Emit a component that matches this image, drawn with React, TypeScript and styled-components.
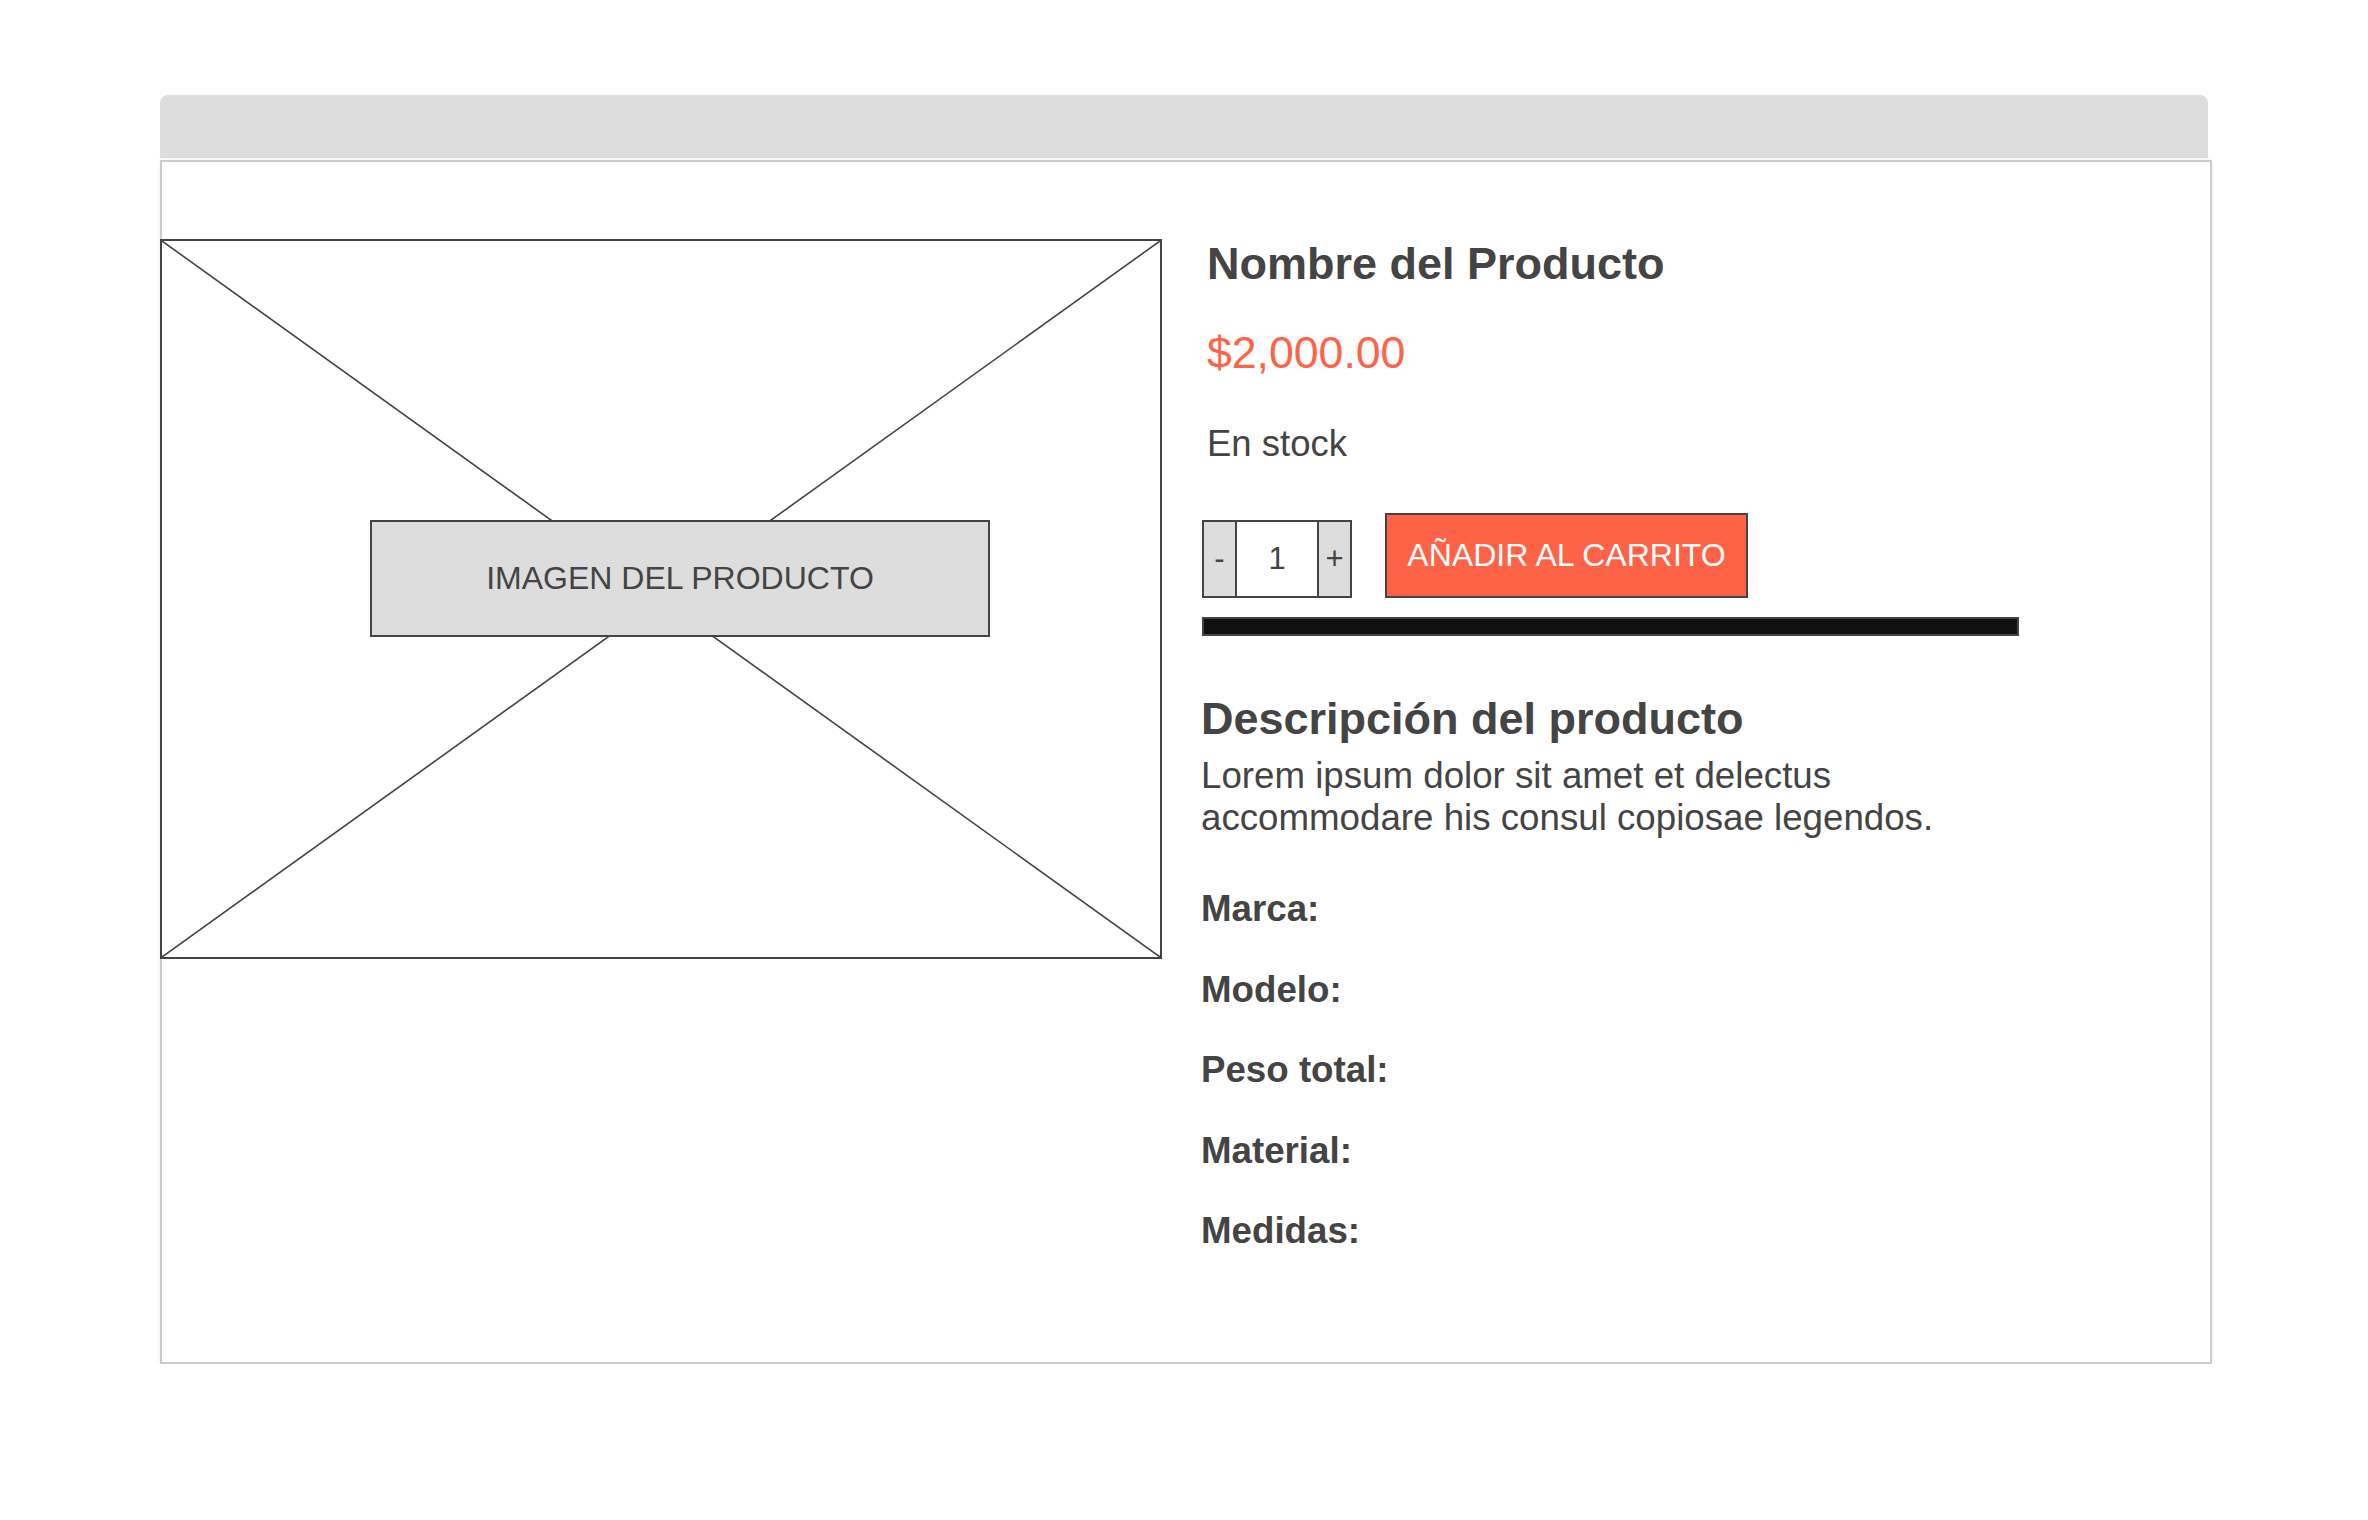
import styled, { createGlobalStyle } from "styled-components";

const GlobalStyle = createGlobalStyle`
  html, body {
    margin: 0;
    padding: 0;
    background: #ffffff;
  }
  body {
    font-family: "Liberation Sans", Arial, sans-serif;
    color: #444444;
  }
`;

const Page = styled.div`
  padding: 95px 0 0 160px;
`;

const Frame = styled.div`
  width: 2052px;
`;

const TopBar = styled.div`
  width: 2048px;
  height: 63px;
  background-color: #dddddd;
  border-radius: 8px 8px 0 0;
  margin-bottom: 2px;
`;

const Card = styled.section`
  box-sizing: border-box;
  width: 2052px;
  border: 2px solid #cccccc;
  background: #ffffff;
  box-shadow: 0 0 6px rgba(0, 0, 0, 0.06);
  padding: 77px 0 110px 0;
  display: flex;
  align-items: flex-start;
  gap: 39px;
`;

const ImageBox = styled.div`
  position: relative;
  box-sizing: border-box;
  width: 1002px;
  height: 720px;
  margin-left: -2px;
  border: 2px solid #444444;
  flex-shrink: 0;
`;

const Cross = styled.svg`
  display: block;
  width: 100%;
  height: 100%;
`;

const ImageLabel = styled.div`
  position: absolute;
  left: 208px;
  top: 279px;
  box-sizing: border-box;
  width: 620px;
  height: 117px;
  background-color: #dddddd;
  border: 2px solid #444444;
  display: flex;
  align-items: center;
  justify-content: center;
  font-size: 32px;
  color: #444444;
`;

const Details = styled.div`
  width: 820px;
  display: flex;
  flex-direction: column;
`;

const Summary = styled.div`
  padding-left: 6px;
  display: flex;
  flex-direction: column;
`;

const Title = styled.h1`
  margin: 0;
  font-size: 45px;
  line-height: 50px;
  font-weight: 700;
  color: #444444;
`;

const Price = styled.div`
  margin-top: 39px;
  font-size: 44.6px;
  line-height: 50px;
  color: #ff6347;
`;

const Stock = styled.div`
  margin-top: 45px;
  font-size: 36.5px;
  line-height: 42px;
  color: #444444;
`;

const Actions = styled.div`
  margin: 48px 0 0 1px;
  display: flex;
  align-items: flex-end;
  gap: 33px;
`;

const Quantity = styled.div`
  box-sizing: border-box;
  height: 78px;
  border: 2px solid #444444;
  display: flex;
`;

const StepButton = styled.button<{ $last?: boolean }>`
  box-sizing: border-box;
  width: 33px;
  height: 100%;
  margin: 0;
  padding: 0;
  border: none;
  border-right: ${(p) => (p.$last ? "none" : "2px solid #444444")};
  border-left: ${(p) => (p.$last ? "2px solid #444444" : "none")};
  background-color: #dddddd;
  font-family: "Liberation Sans", Arial, sans-serif;
  font-size: 31px;
  color: #444444;
  display: flex;
  align-items: center;
  justify-content: center;
`;

const QtyValue = styled.div`
  width: 80px;
  background: #ffffff;
  font-size: 31px;
  color: #444444;
  display: flex;
  align-items: center;
  justify-content: center;
`;

const CartButton = styled.button`
  box-sizing: border-box;
  width: 363px;
  height: 85px;
  margin: 0;
  padding: 0;
  border: 2px solid #444444;
  background-color: #ff6347;
  color: #ffffff;
  font-family: "Liberation Sans", Arial, sans-serif;
  font-size: 32px;
  display: flex;
  align-items: center;
  justify-content: center;
`;

const Divider = styled.div`
  box-sizing: border-box;
  width: 817px;
  height: 19px;
  margin: 19px 0 0 1px;
  background-color: #111111;
  border: 2px solid #444444;
`;

const SectionTitle = styled.h2`
  margin: 58px 0 0 0;
  font-size: 45px;
  line-height: 50px;
  font-weight: 700;
  color: #444444;
`;

const Description = styled.p`
  margin: 11px 0 0 0;
  width: 810px;
  font-size: 36.7px;
  line-height: 42px;
  color: #444444;
`;

const Specs = styled.dl`
  margin: 49px 0 0 0;
  display: flex;
  flex-direction: column;
  gap: 38.5px;
`;

const SpecLabel = styled.dt`
  font-size: 36.7px;
  line-height: 42px;
  font-weight: 700;
  color: #444444;
`;

const specs = ["Marca:", "Modelo:", "Peso total:", "Material:", "Medidas:"];

export default function App() {
  return (
    <>
      <GlobalStyle />
      <Page>
        <Frame>
          <TopBar />
          <Card>
            <ImageBox>
              <Cross viewBox="0 0 100 100" preserveAspectRatio="none">
                <line x1="0" y1="0" x2="100" y2="100" stroke="#444" strokeWidth="1.6" vectorEffect="non-scaling-stroke" />
                <line x1="100" y1="0" x2="0" y2="100" stroke="#444" strokeWidth="1.6" vectorEffect="non-scaling-stroke" />
              </Cross>
              <ImageLabel>IMAGEN DEL PRODUCTO</ImageLabel>
            </ImageBox>
            <Details>
              <Summary>
                <Title>Nombre del Producto</Title>
                <Price>$2,000.00</Price>
                <Stock>En stock</Stock>
              </Summary>
              <Actions>
                <Quantity>
                  <StepButton>-</StepButton>
                  <QtyValue>1</QtyValue>
                  <StepButton $last>+</StepButton>
                </Quantity>
                <CartButton>AÑADIR AL CARRITO</CartButton>
              </Actions>
              <Divider />
              <SectionTitle>Descripción del producto</SectionTitle>
              <Description>
                Lorem ipsum dolor sit amet et delectus accommodare his consul copiosae legendos.
              </Description>
              <Specs>
                {specs.map((s) => (
                  <SpecLabel key={s}>{s}</SpecLabel>
                ))}
              </Specs>
            </Details>
          </Card>
        </Frame>
      </Page>
    </>
  );
}
